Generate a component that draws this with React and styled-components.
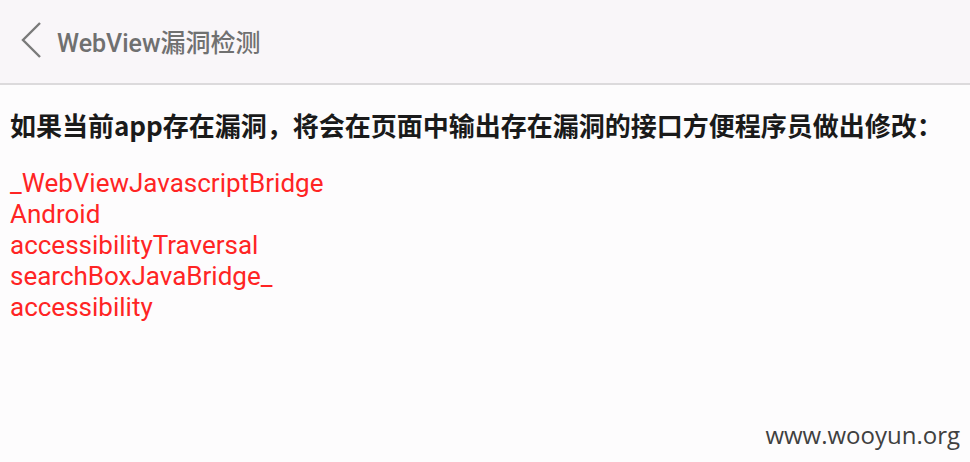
import React from 'react';
import styled, { createGlobalStyle } from 'styled-components';

const GlobalStyle = createGlobalStyle`
  html, body {
    margin: 0;
    padding: 0;
    background: #fdfcfd;
  }
  body {
    font-family: Roboto, "Noto Sans CJK SC", sans-serif;
  }
`;

const Page = styled.div`
  width: 970px;
  height: 462px;
  display: flex;
  flex-direction: column;
  overflow: hidden;
  background: #fdfcfd;
`;

const TopBar = styled.header`
  height: 85px;
  display: flex;
  align-items: center;
  gap: 15px;
  padding: 0 0 2px 20px;
  background: #f9f6f9;
  border-bottom: 2px solid #dcdadc;
  box-sizing: border-box;
`;

const BackIcon = styled.svg`
  width: 22px;
  height: 38px;
  display: block;
`;

const Title = styled.h1`
  margin: 0;
  font-family: Roboto, "Noto Sans CJK SC", sans-serif;
  font-size: 25px;
  font-weight: 500;
  color: #707070;
`;

const Content = styled.main`
  flex: 1;
  display: flex;
  flex-direction: column;
  padding: 22px 10px 0;
`;

const Notice = styled.p`
  margin: 0;
  font-family: "Noto Sans CJK SC", sans-serif;
  font-size: 26px;
  font-weight: 700;
  line-height: 36px;
  color: #1a1a1a;
`;

const InterfaceList = styled.ul`
  list-style: none;
  margin: 25px 0 0;
  padding: 0;
`;

const InterfaceItem = styled.li`
  font-family: Roboto, sans-serif;
  font-size: 26px;
  line-height: 31px;
  color: #ff2424;
`;

const Footer = styled.div`
  margin-top: auto;
  display: flex;
  justify-content: flex-end;
  padding: 0 0 11px 0;
`;

const Watermark = styled.span`
  font-family: "Open Sans", sans-serif;
  font-size: 24px;
  color: #404040;
`;

const leaks = [
  '_WebViewJavascriptBridge',
  'Android',
  'accessibilityTraversal',
  'searchBoxJavaBridge_',
  'accessibility',
];

export default function App() {
  return (
    <Page>
      <GlobalStyle />
      <TopBar>
        <BackIcon viewBox="0 0 22 38">
          <polyline points="20,1 3,18 20,35" fill="none" stroke="#7a7a7a" strokeWidth="2.4" />
        </BackIcon>
        <Title>WebView漏洞检测</Title>
      </TopBar>
      <Content>
        <Notice>如果当前app存在漏洞，将会在页面中输出存在漏洞的接口方便程序员做出修改：</Notice>
        <InterfaceList>
          {leaks.map((name) => (
            <InterfaceItem key={name}>{name}</InterfaceItem>
          ))}
        </InterfaceList>
        <Footer>
          <Watermark>www.wooyun.org</Watermark>
        </Footer>
      </Content>
    </Page>
  );
}
